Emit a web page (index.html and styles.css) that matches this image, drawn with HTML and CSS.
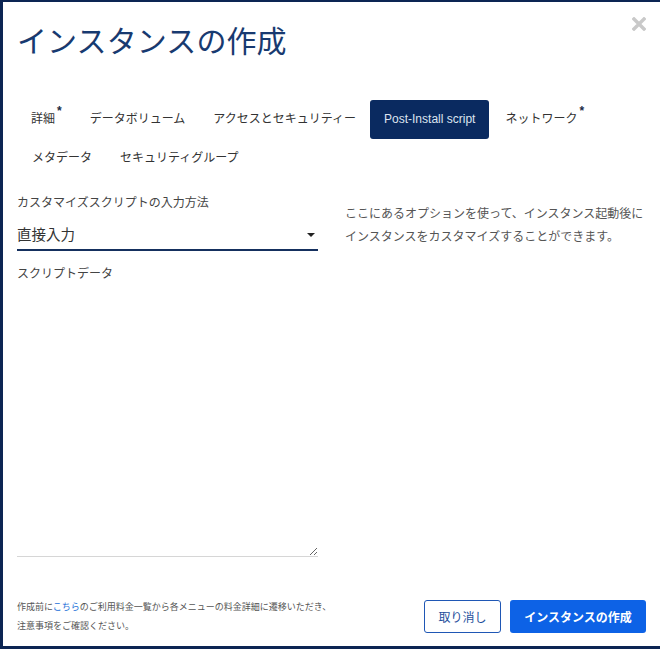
FILE: index.html
```html
<!DOCTYPE html>
<html lang="ja">
<head>
<meta charset="utf-8">
<title>インスタンスの作成</title>
<link rel="stylesheet" href="styles.css">
</head>
<body>
<div class="modal">
  <div class="header">
    <h1 class="title">インスタンスの作成</h1>
    <button class="close" aria-label="close">
      <svg width="14" height="14" viewBox="0 0 14 14"><path d="M2 2 L12 12 M12 2 L2 12" stroke="#c9c9c9" stroke-width="3.4" stroke-linecap="square"/></svg>
    </button>
  </div>
  <nav class="tabs">
    <span class="tab">詳細<span class="req">*</span></span>
    <span class="tab">データボリューム</span>
    <span class="tab">アクセスとセキュリティー</span>
    <span class="tab active">Post-Install script</span>
    <span class="tab">ネットワーク<span class="req">*</span></span>
    <span class="tab">メタデータ</span>
    <span class="tab">セキュリティグループ</span>
  </nav>
  <div class="content">
    <div class="left">
      <label class="label">カスタマイズスクリプトの入力方法</label>
      <div class="select">
        <span>直接入力</span>
        <span class="caret"></span>
      </div>
      <label class="label label2">スクリプトデータ</label>
      <textarea class="script"></textarea>
    </div>
    <div class="right">
      <p class="help">ここにあるオプションを使って、インスタンス起動後に<br>インスタンスをカスタマイズすることができます。</p>
    </div>
  </div>
  <div class="footer">
    <p class="note">作成前に<a href="#" class="link">こちら</a>のご利用料金一覧から各メニューの料金詳細に遷移いただき、<br>注意事項をご確認ください。</p>
    <div class="actions">
      <button class="btn btn-cancel">取り消し</button>
      <button class="btn btn-primary">インスタンスの作成</button>
    </div>
  </div>
</div>
</body>
</html>
```
FILE: styles.css
```css
html, body {
  margin: 0;
  padding: 0;
  background: #0c2553;
  overflow: hidden;
  width: 660px;
  height: 649px;
}
body {
  font-family: "Liberation Sans", "Noto Sans CJK JP", sans-serif;
  color: #333;
}
.modal {
  margin: 2px 0 0 3px;
  width: 660px;
  height: 644px;
  background: #fff;
  box-sizing: border-box;
  padding: 0 17px 0 14px;
}
.header {
  display: flex;
  justify-content: space-between;
  align-items: flex-start;
  padding-top: 20px;
}
.title {
  margin: 0;
  font-size: 30px;
  line-height: 40px;
  font-weight: 400;
  color: #183a70;
  letter-spacing: 0.1px;
}
.close {
  border: 0;
  background: none;
  padding: 0;
  margin-top: -5px;
  width: 14px;
  height: 14px;
  cursor: pointer;
}
.close svg { display: block; }
.tabs {
  margin-top: 38px;
  display: flex;
  flex-wrap: wrap;
  width: 600px;
}
.tab {
  font-size: 12px;
  line-height: 14px;
  padding: 12px 14px 13px;
  height: 14px;
  color: #333;
  border-radius: 3px;
  white-space: nowrap;
}
.tab.active {
  background: #0a2a60;
  color: #dde4ef;
}
.req {
  display: inline-block;
  position: relative;
  top: -8px;
  margin-left: 2px;
  font-size: 12px;
  line-height: 10px;
  font-weight: 700;
  color: #1a2a44;
}
.tabs .tab:nth-child(5) { padding-left: 16px; }
.tabs .tab:nth-child(6) { padding-left: 15px; }
.content {
  display: grid;
  grid-template-columns: 301px 1fr;
  column-gap: 27px;
  margin-top: 16px;
}
.left { display: flex; flex-direction: column; }
.label {
  font-size: 12px;
  line-height: 18px;
  color: #444;
  display: block;
}
.label2 { margin-top: 14px; }
.select {
  display: flex;
  justify-content: space-between;
  align-items: center;
  padding: 11px 0 2px;
  line-height: 24px;
  font-size: 14.5px;
  color: #333;
  border-bottom: 2px solid #15305e;
}
.caret {
  width: 0;
  height: 0;
  border-left: 4px solid transparent;
  border-right: 4px solid transparent;
  border-top: 4px solid #222;
  margin-right: 3px;
}
.script {
  display: block;
  margin-top: 1px;
  width: 301px;
  height: 273px;
  box-sizing: border-box;
  border: 0;
  border-bottom: 1px solid #d6d6d6;
  resize: vertical;
  outline: none;
  padding: 4px 0;
  font-family: inherit;
}
.right { padding-top: 9px; }
.help {
  margin: 0;
  font-size: 12px;
  line-height: 23px;
  color: #555;
  white-space: nowrap;
}
.footer {
  margin-top: 40px;
  display: flex;
  justify-content: space-between;
  align-items: center;
}
.note {
  margin: 0;
  font-size: 9px;
  line-height: 19px;
  color: #555;
  padding-top: 1px;
}
.link {
  color: #1b6fd8;
  text-decoration: none;
}
.actions {
  display: flex;
  gap: 9px;
}
.btn {
  height: 33px;
  border-radius: 3px;
  font-family: inherit;
  font-size: 12px;
  padding: 0;
  cursor: pointer;
}
.btn-cancel {
  width: 77px;
  background: #fff;
  border: 1px solid #1f57b5;
  color: #1f4f9c;
}
.btn-primary {
  width: 136px;
  background: #0d62e6;
  border: 0;
  color: #fff;
  font-weight: 700;
}
```
